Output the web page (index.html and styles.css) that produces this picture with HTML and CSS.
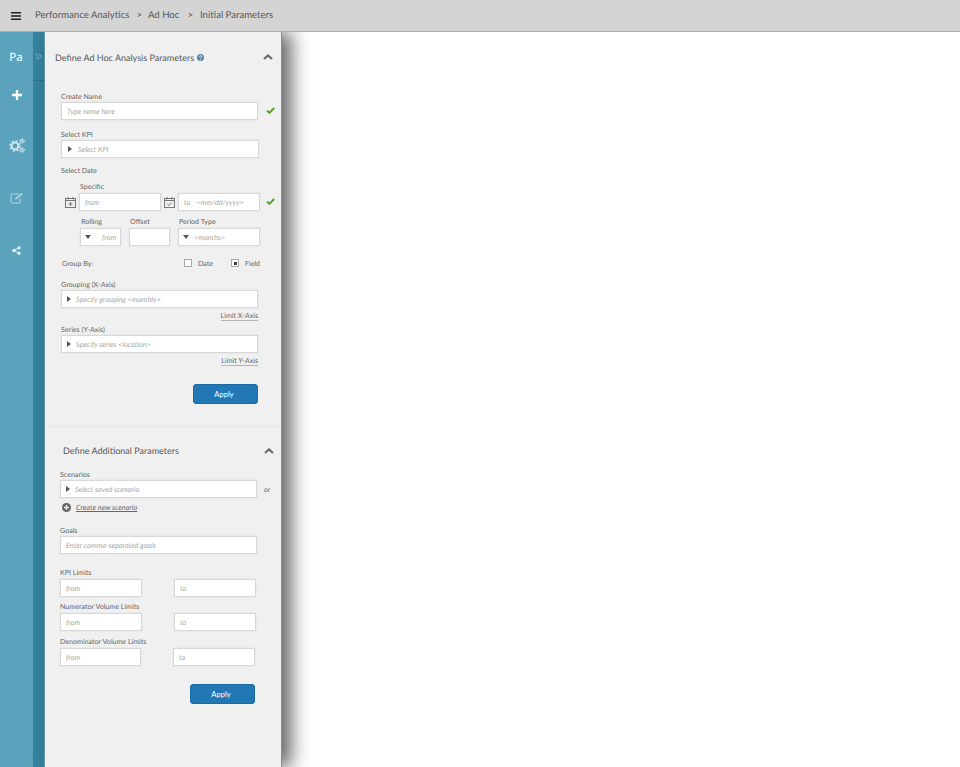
FILE: index.html
```html
<!DOCTYPE html>
<html lang="en">
<head>
<meta charset="utf-8">
<title>Initial Parameters</title>
<link rel="stylesheet" href="styles.css">
</head>
<body>
<header class="topbar">
  <svg class="burger" width="10" height="8" viewBox="0 0 10 8"><path d="M0 .75h10M0 4h10M0 7.25h10" stroke="#222" stroke-width="1.4"/></svg>
  <nav class="crumbs"><span>Performance Analytics</span><span class="sep">&gt;</span><span>Ad Hoc</span><span class="sep sep-b">&gt;</span><span>Initial Parameters</span></nav>
</header>
<div class="app">
  <aside class="rail">
    <div class="rail-item rail-pa">Pa</div>
    <div class="rail-item rail-plus"><svg width="10" height="10" viewBox="0 0 10 10"><path d="M5 0v10M0 5h10" stroke="#fff" stroke-width="2.4"/></svg></div>
    <div class="rail-item rail-gears"><svg width="16" height="15" viewBox="0 0 16 15" fill="none" stroke="#cfe3ea"><circle cx="6" cy="8" r="3.4" stroke-width="2"/><circle cx="6" cy="8" r="5" stroke-width="1.6" stroke-dasharray="2 1.93"/><circle cx="13" cy="3" r="1.4" stroke-width="1.1"/><circle cx="13" cy="3" r="2.4" stroke-width=".9" stroke-dasharray="1.1 1.41"/><circle cx="13" cy="12" r="1.4" stroke-width="1.1"/><circle cx="13" cy="12" r="2.4" stroke-width=".9" stroke-dasharray="1.1 1.41"/></svg></div>
    <div class="rail-item rail-edit"><svg width="14" height="12" viewBox="0 0 14 12" fill="none" stroke="#b5d7e3"><path d="M9 2H2a1 1 0 0 0-1 1v7a1 1 0 0 0 1 1h7a1 1 0 0 0 1-1V7"/><path d="M5 8l.6-2L11.5 1l1.3 1.3L7 7z" fill="#b5d7e3" stroke="none"/></svg></div>
    <div class="rail-item rail-share"><svg width="9" height="9" viewBox="0 0 9 9" fill="none"><path d="M7 1.6 2 4.5l5 2.9" stroke="#e5f0f4" stroke-width="1"/><circle cx="2" cy="4.5" r="1.8" fill="#e5f0f4"/><circle cx="7" cy="1.8" r="1.6" fill="#e5f0f4"/><circle cx="7" cy="7.2" r="1.6" fill="#e5f0f4"/></svg></div>
  </aside>
  <div class="strip">
    <div class="strip-top"><svg width="7" height="7" viewBox="0 0 7 7" fill="none" stroke="#8cc0d3"><path d="M.6.6 3.3 3.5.6 6.4M3.6.6l2.7 2.9-2.7 2.9"/></svg></div>
  </div>
  <main class="panel">
    <section class="sec sec-one">
      <div class="sec-head">
        <h2 class="sec-title">Define Ad Hoc Analysis Parameters<svg class="help" width="7" height="7" viewBox="0 0 7 7"><circle cx="3.5" cy="3.5" r="3.5" fill="#5b87a3"/><path d="M2.4 2.7c0-1.4 2.3-1.3 2.3 0 0 .8-1.1.8-1.1 1.6" stroke="#fff" stroke-width=".8" fill="none"/><circle cx="3.6" cy="5.5" r=".5" fill="#fff"/></svg></h2>
        <svg class="chev" width="10" height="6" viewBox="0 0 10 6" fill="none"><path d="M1 5l4-3.6L9 5" stroke="#666" stroke-width="2"/></svg>
      </div>
      <div class="row f-name">
        <div class="field"><label class="lbl">Create Name</label><div class="box w-197">Type name here</div></div>
        <svg class="check" width="9" height="7" viewBox="0 0 9 7" fill="none"><path d="M.9 3.6l2.5 2.2L8.2 1" stroke="#4aa31a" stroke-width="1.9"/></svg>
      </div>
      <div class="field f-kpi"><label class="lbl">Select KPI</label><div class="box w-198 box-tree"><i class="tri"></i>Select KPI</div></div>
      <div class="lbl f-date">Select Date</div>
      <div class="lbl f-specific">Specific</div>
      <div class="row f-dates">
        <svg class="cal" width="11" height="11" viewBox="0 0 11 11" fill="none" stroke="#777"><rect x=".5" y="1.5" width="10" height="9"/><path d="M.5 3.5h10M3 0v2.5M8 0v2.5M5.5 5v4M3.5 7h4"/></svg>
        <div class="box w-82 box-from">from</div>
        <svg class="cal cal-b" width="11" height="11" viewBox="0 0 11 11" fill="none" stroke="#777"><rect x=".5" y="1.5" width="10" height="9"/><path d="M.5 3.5h10M3 0v2.5M8 0v2.5M3.2 7l1.6 1.5 3-3"/></svg>
        <div class="box w-82 box-to"><span class="to">to</span>&lt;mm/dd/yyyy&gt;</div>
        <svg class="check check-b" width="9" height="7" viewBox="0 0 9 7" fill="none"><path d="M.9 3.6l2.5 2.2L8.2 1" stroke="#4aa31a" stroke-width="1.9"/></svg>
      </div>
      <div class="roll f-roll">
        <div class="field roll-a"><label class="lbl lbl-g2">Rolling</label><div class="box w-41 box-drop"><i class="tri-d"></i><span class="from-r">from</span></div></div>
        <div class="field roll-b"><label class="lbl lbl-g2">Offset</label><div class="box w-41"></div></div>
        <div class="field roll-c"><label class="lbl lbl-g2">Period Type</label><div class="box w-82 box-drop"><i class="tri-d"></i>&lt;months&gt;</div></div>
      </div>
      <div class="group f-group">
        <span class="lbl group-by">Group By:</span>
        <span class="opt opt-date"><i class="chk"></i>Date</span>
        <span class="opt opt-field"><i class="chk chk-on"></i>Field</span>
      </div>
      <div class="field f-xaxis"><label class="lbl">Grouping (X-Axis)</label><div class="box w-197 box-tree box-tree-s"><i class="tri"></i>Specify grouping &lt;monthly&gt;</div></div>
      <div class="limit w-197"><a class="limit-link">Limit X-Axis</a></div>
      <div class="field f-yaxis"><label class="lbl">Series (Y-Axis)</label><div class="box w-197 box-tree box-tree-s"><i class="tri"></i>Specify series &lt;location&gt;</div></div>
      <div class="limit w-197"><a class="limit-link">Limit Y-Axis</a></div>
      <div class="act act-one"><button class="btn">Apply</button></div>
    </section>
    <section class="sec sec-two">
      <div class="sec-head sec-head-b">
        <h2 class="sec-title">Define Additional Parameters</h2>
        <svg class="chev" width="10" height="6" viewBox="0 0 10 6" fill="none"><path d="M1 5l4-3.6L9 5" stroke="#666" stroke-width="2"/></svg>
      </div>
      <div class="row">
        <div class="field"><label class="lbl">Scenarios</label><div class="box w-197 box-tree box-tree-s"><i class="tri"></i>Select saved scenario</div></div>
        <span class="or">or</span>
      </div>
      <div class="create"><svg width="9" height="9" viewBox="0 0 9 9"><circle cx="4.5" cy="4.5" r="4.5" fill="#666"/><path d="M4.5 2v5M2 4.5h5" stroke="#f0f0f0" stroke-width="1.3"/></svg><a class="create-link">Create new scenario</a></div>
      <div class="field f-goals"><label class="lbl">Goals</label><div class="box w-197">Enter comma-separated goals</div></div>
      <div class="field f-lim1"><label class="lbl lbl-g2">KPI Limits</label><div class="pair"><div class="box w-82">from</div><div class="box w-82">to</div></div></div>
      <div class="field f-lim2"><label class="lbl lbl-g2">Numerator Volume Limits</label><div class="pair"><div class="box w-82">from</div><div class="box w-82">to</div></div></div>
      <div class="field f-lim3"><label class="lbl lbl-g2">Denominator Volume Limits</label><div class="pair"><div class="box w-81">from</div><div class="box w-82">to</div></div></div>
      <div class="act act-two"><button class="btn">Apply</button></div>
    </section>
  </main>
</div>
</body>
</html>
```

FILE: styles.css
```css
* { box-sizing: border-box; }
html, body { margin: 0; height: 100%; }
body {
  background: #fff;
  overflow: hidden;
  font-family: Lato, "Open Sans", sans-serif;
  text-rendering: geometricPrecision;
  color: #666;
}

.topbar {
  height: 32px;
  background: #d4d4d4;
  border-bottom: 1px solid #a9a9a9;
  display: flex;
  align-items: center;
  padding-left: 11px;
  position: relative;
  z-index: 3;
}
.burger { flex: none; }
.crumbs {
  margin-left: 14px;
  display: flex;
  font-size: 9.6px;
  color: #585858;
}
.sep { margin: 0 6px 0 7px; }
.sep-b { margin-left: 8px; margin-right: 7px; }

.app { display: flex; height: 735px; }

.rail { width: 33px; background: #5ba3bd; flex: none; }
.rail-item { height: 20px; display: flex; align-items: center; justify-content: center; }
.rail-pa { margin-top: 15px; color: #fff; font-size: 11.5px; font-family: "Noto Sans", sans-serif; padding-right: 1px; }
.rail-plus { margin-top: 18px; }
.rail-gears { margin-top: 30px; }
.rail-edit { margin-top: 33px; }
.rail-share { margin-top: 32px; }

.strip { background: #35849f; flex: none; border-right: 1px solid #6fa6ba; width: 12px; }
.strip-top {
  height: 49px;
  border-bottom: 1px solid #2e7189;
  display: flex;
  align-items: center;
  justify-content: center;
  padding-right: 1px;
}

.panel {
  width: 237px;
  flex: none;
  background: #f0f0f0;
  border-right: 1px solid #8e8e8e;
  box-shadow: 9px 0 18px rgba(0, 0, 0, .62);
}

.sec-one { padding: 0 0 22px 16px; border-bottom: 1px solid #e6e6e6; }
.sec-two { padding-left: 15px; }
.sec-head { height: 50px; display: flex; align-items: center; justify-content: space-between; margin-left: -6px; padding-right: 8px; }
.sec-head-b { height: 37px; margin: 5px 0 0 3px; padding-right: 7px; }
.sec-title { margin: 0; font-size: 9px; font-weight: 400; color: #585858; display: flex; align-items: center; }
.help { margin-left: 3px; }

.lbl { display: block; font-size: 7.1px; line-height: 10px; padding-top: 1px; color: #666; }
.lbl-g2 { margin-bottom: 1px; }

.box {
  height: 18px;
  background: #fff;
  border: 1px solid #d8d8d8;
  box-shadow: 0 0 1px #d0d0d0;
  font-size: 7.3px;
  font-style: italic;
  color: #a8a8a8;
  display: flex;
  align-items: center;
  padding-left: 5px;
  flex: none;
}
.w-197 { width: 197px; }
.w-198 { width: 198px; }
.w-82 { width: 82px; }
.w-81 { width: 81px; }
.w-41 { width: 41px; }

.tri { width: 0; height: 0; border: 3px solid transparent; border-left: 4px solid #555; border-right: 0; margin-right: 6px; margin-left: 1px; }
.box-tree { padding-left: 5px; }
.box-tree-s .tri { margin-right: 5px; margin-left: 0; }
.tri-d { width: 0; height: 0; border: 3.5px solid transparent; border-top: 4px solid #555; border-bottom: 0; margin-right: 5px; }
.box-drop { padding-left: 4px; }
.from-r { margin-left: 6px; }
.to { margin-right: 6px; }

.row { display: flex; align-items: flex-end; }
.check { margin: 0 0 6px 8px; }
.f-name { margin-top: 9px; }
.f-kpi { margin-top: 9px; }
.f-date { margin: 7px 0 0 0; }
.f-specific { margin: 5px 0 1px 19px; }
.f-dates { margin-left: 4px; align-items: center; }
.cal { margin-right: 3px; }
.cal-b { margin-left: 3px; }
.check-b { margin: 0 0 2px 6px; }

.roll { display: flex; margin: 5px 0 0 19px; }
.roll-b { margin-left: 8px; }
.roll-c { margin-left: 8px; }
.roll .lbl { margin-left: 1px; }

.group { display: flex; align-items: center; margin: 12px 0 0 1px; height: 10px; }
.group-by { margin: 0; width: 122px; }
.opt { display: flex; align-items: center; font-size: 7.1px; }
.opt-date { width: 47px; }
.chk { width: 8px; height: 8px; background: #fff; border: 1px solid #aaa; margin-right: 6px; display: flex; align-items: center; justify-content: center; }
.chk-on::after { content: ""; width: 3px; height: 3px; background: #444; }

.f-xaxis { margin-top: 11px; }
.f-yaxis { margin-top: 4px; }
.limit { display: flex; justify-content: flex-end; margin-top: 2px; height: 10px; }
.limit-link { font-size: 7.1px; line-height: 9px; padding-top: 1px; color: #666; border-bottom: 1px solid #b5b5b5; height: 11px; }

.act { display: flex; }
.act-one { margin: 19px 0 0 132px; }
.act-two { margin: 18px 0 0 130px; }
.btn {
  width: 65px;
  height: 20px;
  padding: 0 3px 0 0;
  background: #2178b5;
  border: 1px solid #1a6aa3;
  border-radius: 3px;
  color: #fff;
  font: 400 7.6px Lato, sans-serif;
}

.or { font-size: 7.1px; font-style: italic; color: #666; margin: 0 0 4px 7px; }
.create { display: flex; align-items: center; margin: 4px 0 0 2px; height: 10px; }
.create-link { margin-left: 5px; font-size: 7.3px; font-style: italic; color: #666; text-decoration: underline; }
.f-goals { margin-top: 13px; }
.f-lim1 { margin-top: 13px; }
.f-lim2 { margin-top: 4px; }
.f-lim3 { margin-top: 5px; }
.pair { display: flex; gap: 32px; }
```
